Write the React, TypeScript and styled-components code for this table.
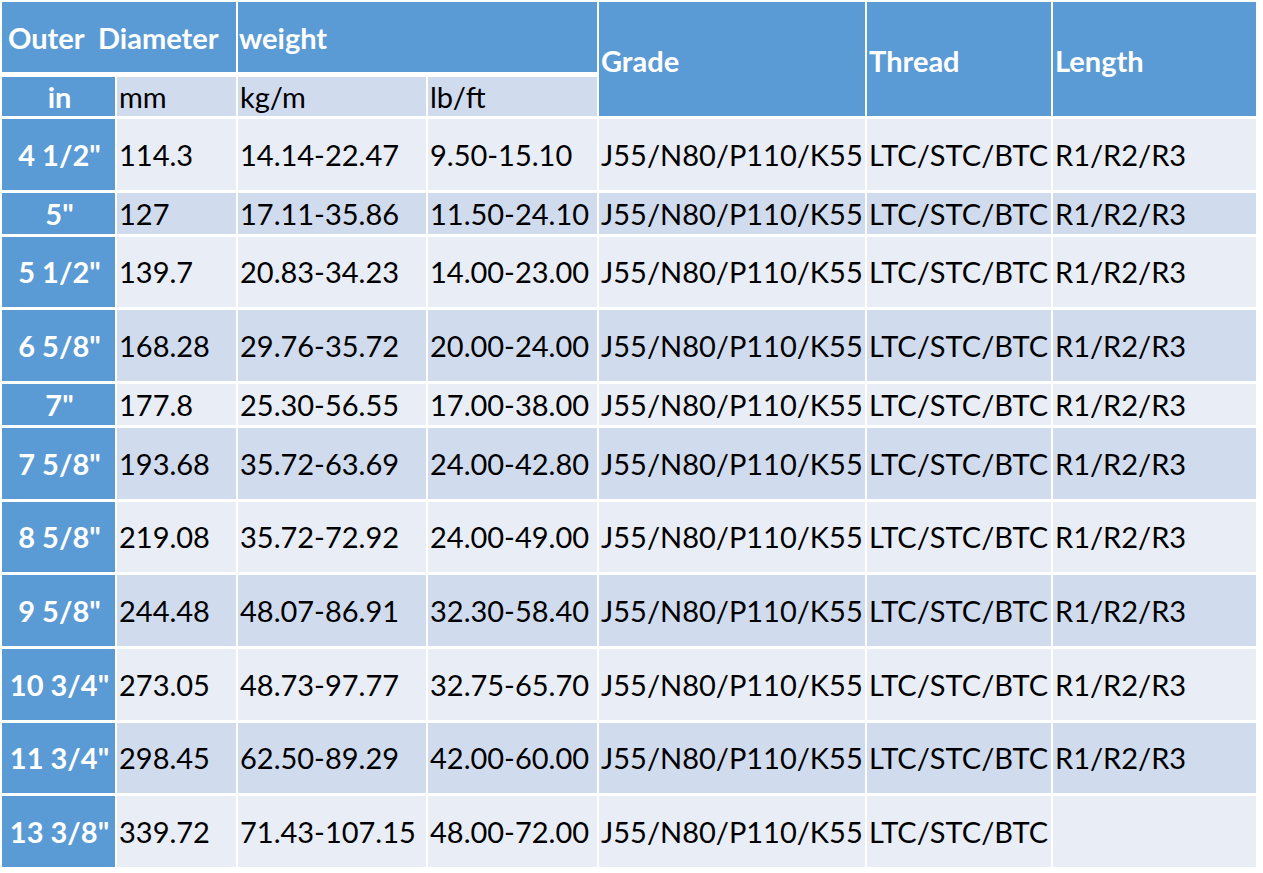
import React from "react";
import styled, { createGlobalStyle } from "styled-components";

const Global = createGlobalStyle`
  html, body { margin: 0; padding: 0; background: #ffffff; }
  body { font-family: Lato, "Open Sans", sans-serif; }
`;

const Grid = styled.div`
  display: grid;
  grid-template-columns: 113px 119px 188px 169px 266px 184px 203px;
  column-gap: 2px;
  row-gap: 3px;
  padding: 2px 0 0 2px;
  width: max-content;
  font-family: Lato, "Open Sans", sans-serif;
  font-size: 29px;
  line-height: 1;
`;

const Cell = styled.div<{ $tone: "blue" | "light" | "dark"; $h?: number; $align?: "left" | "center"; $bold?: boolean }>`
  display: flex;
  align-items: center;
  justify-content: ${(p) => (p.$align === "center" ? "center" : "flex-start")};
  height: ${(p) => (p.$h ? `${p.$h}px` : "auto")};
  padding-left: 2px;
  box-sizing: border-box;
  white-space: pre;
  font-weight: ${(p) => (p.$bold ? 700 : 400)};
  color: ${(p) => (p.$tone === "blue" ? "#ffffff" : "#000000")};
  background: ${(p) => (p.$tone === "blue" ? "#5b9bd5" : p.$tone === "dark" ? "#d0dbee" : "#e9edf6")};
`;

const TopHead = styled(Cell)<{ $span: number; $pad?: number }>`
  grid-column: span ${(p) => p.$span};
  padding-left: ${(p) => p.$pad ?? 1}px;
`;

const TallHead = styled(Cell)`
  grid-row: span 2;
  padding-left: 2px;
  padding-top: 2px;
`;

const SubHead = styled(Cell)`
  margin-top: 2px;
  height: 39px;
`;

const rows: [string, string, string, string, string][] = [
  ['4 1/2"', "114.3", "14.14-22.47", "9.50-15.10", "R1/R2/R3"],
  ['5"', "127", "17.11-35.86", "11.50-24.10", "R1/R2/R3"],
  ['5 1/2"', "139.7", "20.83-34.23", "14.00-23.00", "R1/R2/R3"],
  ['6 5/8"', "168.28", "29.76-35.72", "20.00-24.00", "R1/R2/R3"],
  ['7"', "177.8", "25.30-56.55", "17.00-38.00", "R1/R2/R3"],
  ['7 5/8"', "193.68", "35.72-63.69", "24.00-42.80", "R1/R2/R3"],
  ['8 5/8"', "219.08", "35.72-72.92", "24.00-49.00", "R1/R2/R3"],
  ['9 5/8"', "244.48", "48.07-86.91", "32.30-58.40", "R1/R2/R3"],
  ['10 3/4"', "273.05", "48.73-97.77", "32.75-65.70", "R1/R2/R3"],
  ['11 3/4"', "298.45", "62.50-89.29", "42.00-60.00", "R1/R2/R3"],
  ['13 3/8"', "339.72", "71.43-107.15", "48.00-72.00", ""],
];

export default function App() {
  return (
    <>
      <Global />
      <Grid>
        <TopHead $tone="blue" $span={2} $bold $h={70} $pad={6}>
          {"Outer  Diameter"}
        </TopHead>
        <TopHead $tone="blue" $span={2} $bold $h={70}>
          weight
        </TopHead>
        <TallHead $tone="blue" $bold>Grade</TallHead>
        <TallHead $tone="blue" $bold>Thread</TallHead>
        <TallHead $tone="blue" $bold>Length</TallHead>

        <SubHead $tone="blue" $bold $align="center">in</SubHead>
        <SubHead $tone="dark">mm</SubHead>
        <SubHead $tone="dark">kg/m</SubHead>
        <SubHead $tone="dark">lb/ft</SubHead>

        {rows.map((r, i) => {
          const tone = i % 2 === 0 ? "light" : "dark";
          const h = r[0] === '5"' || r[0] === '7"' ? 41 : 70.67;
          return (
            <React.Fragment key={r[0]}>
              <Cell $tone="blue" $bold $align="center" $h={h}>{r[0]}</Cell>
              <Cell $tone={tone} $h={h}>{r[1]}</Cell>
              <Cell $tone={tone} $h={h}>{r[2]}</Cell>
              <Cell $tone={tone} $h={h}>{r[3]}</Cell>
              <Cell $tone={tone} $h={h}>J55/N80/P110/K55</Cell>
              <Cell $tone={tone} $h={h}>LTC/STC/BTC</Cell>
              <Cell $tone={tone} $h={h}>{r[4]}</Cell>
            </React.Fragment>
          );
        })}
      </Grid>
    </>
  );
}
